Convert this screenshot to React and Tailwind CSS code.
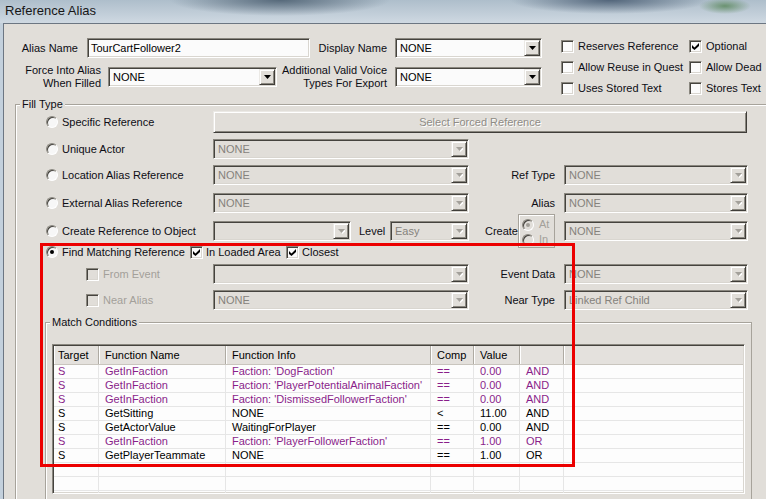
import React from "react";

const SUNKEN =
  "border border-t-[#8a877f] border-l-[#8a877f] border-b-white border-r-white shadow-[inset_1px_1px_0_#45433e,inset_-1px_-1px_0_#d9d6d0]";
const RAISED =
  "border border-t-[#ebe9e5] border-l-[#ebe9e5] border-b-[#3f3d39] border-r-[#3f3d39] shadow-[inset_1px_1px_0_#ffffff,inset_-1px_-1px_0_#8a877f]";

function Arrow({ disabled }) {
  return (
    <div className={`w-[16px] h-[16px] shrink-0 bg-[#e1ded9] flex items-center justify-center ${RAISED}`}>
      <svg width="7" height="5" viewBox="0 0 7 5">
        {disabled && <path d="M1 1h7L4.5 5z" fill="#ffffff" />}
        <path d="M0 0h7L3.5 4z" fill={disabled ? "#a3a09a" : "#000000"} />
      </svg>
    </div>
  );
}

function Drop({ className = "", text = "", disabled }) {
  return (
    <div
      className={`h-[20px] shrink-0 flex items-stretch p-[1px] ${SUNKEN} ${
        disabled ? "bg-[#e1ded9] text-[#85827c]" : "bg-[#fbfbfb] text-black"
      } ${className}`}
    >
      <div className="flex-1 min-w-0 pl-[3px] flex items-center whitespace-nowrap overflow-hidden">{text}</div>
      <Arrow disabled={disabled} />
    </div>
  );
}

function Check({ checked, disabled }) {
  return (
    <div
      className={`w-[13px] h-[13px] shrink-0 flex items-center justify-center ${SUNKEN} ${
        disabled ? "bg-[#e1ded9]" : "bg-[#fbfbfb]"
      }`}
    >
      {checked && (
        <svg width="7" height="7" viewBox="0 0 7 7">
          <polygon points="0,2 2.5,4.5 7,0 7,3 2.5,7 0,5" fill="#000000" />
        </svg>
      )}
    </div>
  );
}

function Radio({ checked, disabled }) {
  return (
    <div
      className={`w-[12px] h-[12px] shrink-0 rounded-full border border-t-[#8a877f] border-l-[#8a877f] border-b-white border-r-white shadow-[inset_1px_1px_0_#45433e] flex items-center justify-center ${
        disabled ? "bg-[#e1ded9]" : "bg-[#f7f7f7]"
      }`}
    >
      {checked && <div className={`w-[4px] h-[4px] rounded-full ${disabled ? "bg-[#a09d96]" : "bg-black"}`} />}
    </div>
  );
}

function CheckRow({ label, checked }) {
  return (
    <div className="flex items-center gap-[4px] whitespace-nowrap">
      <Check checked={checked} />
      <span>{label}</span>
    </div>
  );
}

function OptCell({ label, checked }) {
  return (
    <div className="w-[197px] shrink-0 flex items-center pl-[30px] gap-[4px] whitespace-nowrap">
      <Radio checked={checked} />
      <span>{label}</span>
    </div>
  );
}

function RightLabel({ children }) {
  return <div className="w-[95px] shrink-0 text-right pr-[9px] whitespace-nowrap">{children}</div>;
}

const PURPLE = "text-[#8a1e8a]";
const rows = [
  ["S", "GetInFaction", "Faction: 'DogFaction'", "==", "0.00", "AND", true],
  ["S", "GetInFaction", "Faction: 'PlayerPotentialAnimalFaction'", "==", "0.00", "AND", true],
  ["S", "GetInFaction", "Faction: 'DismissedFollowerFaction'", "==", "0.00", "AND", true],
  ["S", "GetSitting", "NONE", "<", "11.00", "AND", false],
  ["S", "GetActorValue", "WaitingForPlayer", "==", "0.00", "AND", false],
  ["S", "GetInFaction", "Faction: 'PlayerFollowerFaction'", "==", "1.00", "OR", true],
  ["S", "GetPlayerTeammate", "NONE", "==", "1.00", "OR", false],
  ["", "", "", "", "", "", false],
  ["", "", "", "", "", "", false],
  ["", "", "", "", "", "", false],
];

const COLS = [
  "w-[45px] pl-[4px]",
  "w-[127px] pl-[6px]",
  "w-[205px] pl-[6px]",
  "w-[43px] pl-[6px]",
  "w-[46px] pl-[6px]",
  "w-[44px] pl-[6px]",
];
const HEAD = ["Target", "Function Name", "Function Info", "Comp", "Value", ""];

export default function App() {
  return (
    <div className="relative w-[766px] h-[499px] overflow-hidden flex flex-col bg-[#c3d0dc] text-[11px] leading-[13px] text-[#0d0d14] font-['Liberation_Sans',Arial,sans-serif]">
      <div className="h-[23px] shrink-0 flex items-center pl-[5px] pb-[2px] text-[13px] text-[#161616] bg-[radial-gradient(ellipse_110px_16px_at_280px_0px,#56697a,transparent),radial-gradient(ellipse_100px_14px_at_610px_0px,#52657a,transparent),radial-gradient(ellipse_26px_8px_at_725px_6px,#6a9270,transparent),linear-gradient(180deg,#aebecb,#cfd9e2)]">
        Reference Alias
      </div>
      <div className="flex-1 min-h-0 ml-[3px] border-l border-t border-[#6c7682] bg-[#e1ded9] overflow-hidden">
        {/* top section */}
        <div className="flex w-[800px]">
          <div className="flex flex-col pt-[14px] w-[538px] shrink-0">
            <div className="flex items-center">
              <div className="w-[74px] shrink-0 text-right whitespace-nowrap">Alias Name</div>
              <div className={`ml-[9px] w-[223px] h-[20px] shrink-0 p-[1px] bg-[#fbfbfb] text-black flex items-center ${SUNKEN}`}>
                <span className="pl-[2px]">TourCartFollower2</span>
              </div>
              <div className="w-[77px] shrink-0 text-right whitespace-nowrap">Display Name</div>
              <Drop className="ml-[8px] w-[147px]" text="NONE" />
            </div>
            <div className="flex items-center mt-[6px]">
              <div className="w-[97px] shrink-0 text-right whitespace-nowrap">
                Force Into Alias
                <br />
                When Filled
              </div>
              <Drop className="ml-[7px] w-[169px]" text="NONE" />
              <div className="w-[110px] shrink-0 text-right whitespace-nowrap">
                Additional Valid Voice
                <br />
                Types For Export
              </div>
              <Drop className="ml-[8px] w-[147px]" text="NONE" />
            </div>
          </div>
          <div className="ml-[19px] pt-[12px] grid grid-cols-[128px_max-content] auto-rows-[21px]">
            <CheckRow label="Reserves Reference" />
            <CheckRow label="Optional" checked />
            <CheckRow label="Allow Reuse in Quest" />
            <CheckRow label="Allow Dead" />
            <CheckRow label="Uses Stored Text" />
            <CheckRow label="Stores Text" />
          </div>
        </div>

        {/* Fill Type group */}
        <div className="mt-[5px] ml-[11px] w-[800px] h-[420px] border border-[#a7a39b] shadow-[inset_1px_1px_0_#ffffff]">
          <div className="-mt-[7px] ml-[4px] px-[2px] w-fit bg-[#e1ded9] leading-[13px]">Fill Type</div>

          <div className="flex items-center h-[22px]">
            <OptCell label="Specific Reference" />
            <div className={`w-[534px] h-[22px] shrink-0 bg-[#e1ded9] flex items-center justify-center text-[#8f8c86] [text-shadow:1px_1px_0_#ffffff] ${RAISED}`}>
              Select Forced Reference
            </div>
          </div>

          <div className="flex items-center h-[20px] mt-[6px]">
            <OptCell label="Unique Actor" />
            <Drop className="w-[256px]" text="NONE" disabled />
          </div>

          <div className="flex items-center h-[20px] mt-[6px]">
            <OptCell label="Location Alias Reference" />
            <Drop className="w-[256px]" text="NONE" disabled />
            <RightLabel>Ref Type</RightLabel>
            <Drop className="w-[184px]" text="NONE" disabled />
          </div>

          <div className="flex items-center h-[20px] mt-[8px]">
            <OptCell label="External Alias Reference" />
            <Drop className="w-[256px]" text="NONE" disabled />
            <RightLabel>Alias</RightLabel>
            <Drop className="w-[184px]" text="NONE" disabled />
          </div>

          <div className="flex items-center h-[20px] mt-[8px]">
            <OptCell label="Create Reference to Object" />
            <div className="w-[256px] shrink-0 flex items-center">
              <Drop className="w-[138px]" text="" disabled />
              <div className="w-[39px] shrink-0 pl-[8px] whitespace-nowrap">Level</div>
              <Drop className="w-[79px]" text="Easy" disabled />
            </div>
            <div className="w-[95px] shrink-0 flex items-center justify-end pr-[9px]">
              <span className="whitespace-nowrap">Create</span>
              <div className="-my-[7px] w-[37px] h-[34px] shrink-0 border border-[#a7a39b] shadow-[inset_1px_1px_0_#ffffff] overflow-hidden flex flex-col pl-[3px] pt-[2px] text-[#a3a09a]">
                <div className="h-[16px] flex items-center gap-[5px]">
                  <Radio checked disabled />
                  <span>At</span>
                </div>
                <div className="h-[16px] flex items-center gap-[5px]">
                  <Radio disabled />
                  <span>In</span>
                </div>
              </div>
            </div>
            <Drop className="w-[184px]" text="NONE" disabled />
          </div>

          <div className="flex items-center h-[14px] mt-[4px]">
            <div className="shrink-0 flex items-center pl-[30px] gap-[4px] whitespace-nowrap">
              <Radio checked />
              <span className="w-[128px]">Find Matching Reference</span>
            </div>
            <Check checked />
            <span className="ml-[3px] w-[80px] whitespace-nowrap">In Loaded Area</span>
            <Check checked />
            <span className="ml-[3px] whitespace-nowrap">Closest</span>
          </div>

          <div className="flex items-center h-[20px] mt-[5px]">
            <div className="w-[197px] shrink-0 flex items-center pl-[70px] gap-[4px] whitespace-nowrap text-[#a3a09a]">
              <Check disabled />
              <span>From Event</span>
            </div>
            <Drop className="w-[256px]" text="" disabled />
            <RightLabel>Event Data</RightLabel>
            <Drop className="w-[184px]" text="NONE" disabled />
          </div>

          <div className="flex items-center h-[20px] mt-[6px]">
            <div className="w-[197px] shrink-0 flex items-center pl-[70px] gap-[4px] whitespace-nowrap text-[#a3a09a]">
              <Check disabled />
              <span>Near Alias</span>
            </div>
            <Drop className="w-[256px]" text="NONE" disabled />
            <RightLabel>Near Type</RightLabel>
            <Drop className="w-[184px]" text="Linked Ref Child" disabled />
          </div>

          {/* Match Conditions */}
          <div className="mt-[12px] ml-[29px] w-[707px] h-[200px] border border-[#a7a39b] shadow-[inset_1px_1px_0_#ffffff]">
            <div className="-mt-[7px] ml-[4px] px-[2px] w-fit bg-[#e1ded9] leading-[13px]">Match Conditions</div>
            <div className={`mt-[15px] ml-[6px] w-[693px] h-[150px] p-[1px] bg-[#fdfdfd] overflow-hidden ${SUNKEN}`}>
              <div className="flex h-[19px] bg-[#e4e1dd] border-b border-[#c9c5be] text-black">
                {HEAD.map((h, i) => (
                  <div
                    key={i}
                    className={`${COLS[i]} shrink-0 flex items-center border-r border-[#aeaaa2] shadow-[inset_1px_0_0_#ffffff] whitespace-nowrap`}
                  >
                    {h}
                  </div>
                ))}
                <div className="flex-1 shadow-[inset_1px_0_0_#ffffff]" />
              </div>
              {rows.map((r, ri) => (
                <div
                  key={ri}
                  className={`flex h-[14px] border-b border-[#e6e6e6] ${r[6] ? PURPLE : "text-black"}`}
                >
                  {COLS.map((c, ci) => (
                    <div key={ci} className={`${c} shrink-0 flex items-center border-r border-[#e6e6e6] whitespace-nowrap overflow-hidden`}>
                      {r[ci]}
                    </div>
                  ))}
                  <div className="flex-1" />
                </div>
              ))}
            </div>
          </div>
        </div>
      </div>

      {/* red annotation rectangle */}
      <div className="absolute left-[40px] top-[243px] w-[535px] h-[224px] border-[3px] border-[#ec0000] pointer-events-none" />
    </div>
  );
}
